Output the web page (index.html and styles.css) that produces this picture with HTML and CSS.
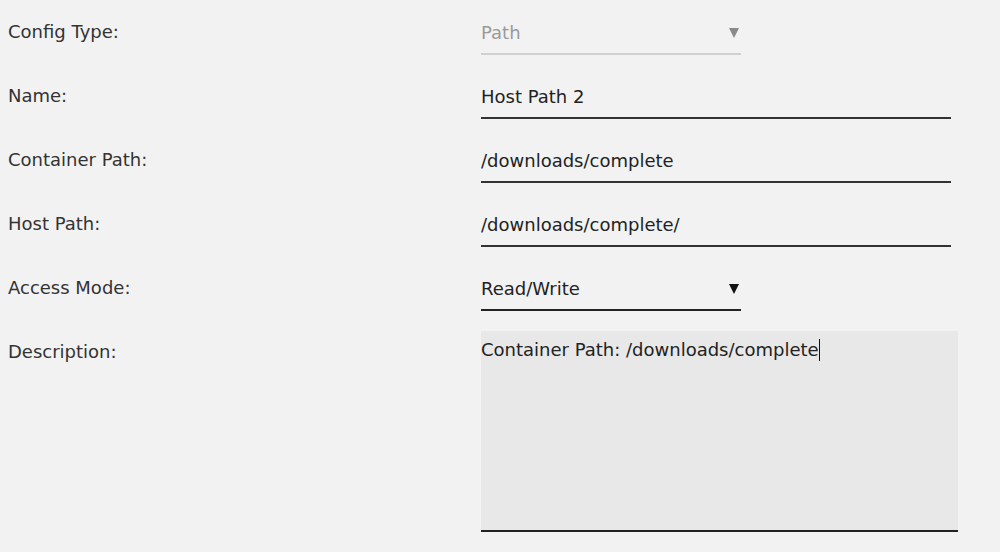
FILE: index.html
```html
<!DOCTYPE html>
<html lang="en">
<head>
    <meta charset="UTF-8">
    <title>Add Path</title>
    <link rel="stylesheet" href="styles.css">
</head>
<body>
    <form class="config-form">
        <div class="row">
            <label>Config Type:</label>
            <div class="select disabled">
                <select disabled>
                    <option>Path</option>
                </select>
            </div>
        </div>
        <div class="row">
            <label>Name:</label>
            <input type="text" class="text-field" value="Host Path 2">
        </div>
        <div class="row">
            <label>Container Path:</label>
            <input type="text" class="text-field" value="/downloads/complete">
        </div>
        <div class="row">
            <label>Host Path:</label>
            <input type="text" class="text-field" value="/downloads/complete/">
        </div>
        <div class="row">
            <label>Access Mode:</label>
            <div class="select">
                <select>
                    <option>Read/Write</option>
                    <option>Read Only</option>
                </select>
            </div>
        </div>
        <div class="row">
            <label>Description:</label>
            <div class="text-area">Container Path: /downloads/complete<span class="caret"></span></div>
        </div>
    </form>
</body>
</html>
```

FILE: styles.css
```css
body {
    margin: 0;
    padding: 11px 0 0 8px;
    background-color: #f2f2f2;
    font-family: "DejaVu Sans", sans-serif;
    font-size: 18px;
    color: #222;
}
.config-form {
    display: flex;
    flex-direction: column;
    gap: 20px;
}
.row {
    display: grid;
    grid-template-columns: 473px auto;
    align-items: start;
}
.row label {
    line-height: 42px;
    color: #333;
}
.text-field {
    width: 470px;
    height: 44px;
    box-sizing: border-box;
    padding: 1px 0 0;
    margin: 0;
    border: none;
    border-bottom: 2px solid #333;
    background: transparent;
    font: inherit;
    color: #222;
    outline: none;
}
.select {
    position: relative;
    width: 260px;
}
.select select {
    appearance: none;
    -webkit-appearance: none;
    width: 100%;
    height: 44px;
    padding: 1px 0 0;
    margin: 0;
    border: none;
    border-bottom: 2px solid #222;
    border-radius: 0;
    background: transparent;
    font: inherit;
    color: #222;
    outline: none;
}
.select::after {
    content: "";
    position: absolute;
    right: 2px;
    top: 17px;
    border-left: 5px solid transparent;
    border-right: 5px solid transparent;
    border-top: 10px solid #111;
    pointer-events: none;
}
.select.disabled select {
    color: #9a9a9a;
    border-bottom-color: #d0d0d0;
    opacity: 1;
}
.select.disabled::after {
    border-top-color: #8a8a8a;
}
.text-area {
    width: 477px;
    height: 201px;
    box-sizing: border-box;
    padding-top: 8px;
    line-height: 22px;
    background-color: #e8e8e8;
    border-bottom: 2px solid #222;
}
.caret {
    display: inline-block;
    width: 1px;
    height: 22px;
    background-color: #111;
    vertical-align: top;
}
```
